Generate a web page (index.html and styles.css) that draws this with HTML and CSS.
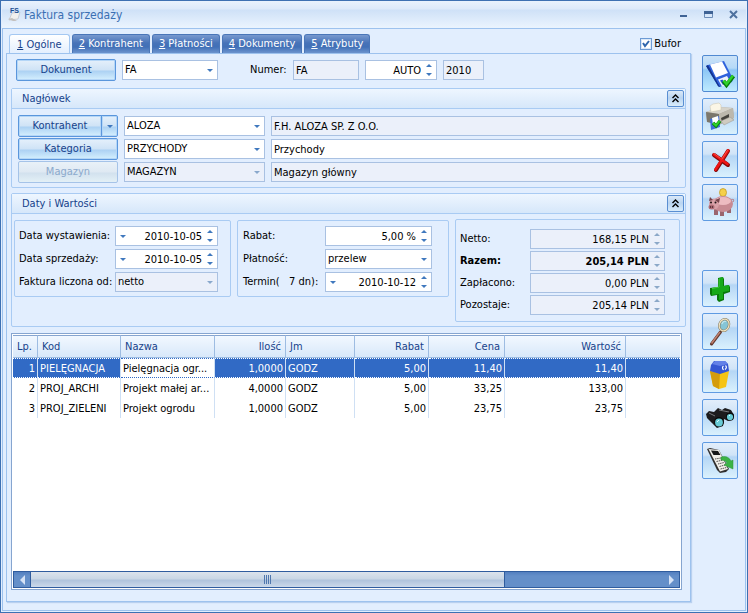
FILE: index.html
```html
<!DOCTYPE html>
<html lang="pl">
<head>
    <meta charset="UTF-8">
    <meta name="viewport" content="width=device-width, initial-scale=1.0">
    <title>Faktura sprzedaży</title>
    <link rel="stylesheet" href="styles.css">
</head>
<body>
    <div class="window">
        <header class="titlebar">
            <svg class="app-icon" width="16" height="16" viewBox="0 0 16 16" aria-hidden="true">
                <path d="M5 6L13 5L11 12L2 13Z" fill="#f2f0ee" stroke="#c9cdd6" stroke-width="1"/>
                <path d="M1 12L5 11L10 14L6 14Z" fill="#c4c0bd"/>
                <text x="3" y="6" class="app-icon-text">FS</text>
            </svg>
            <h1>Faktura sprzedaży</h1>
            <div class="window-buttons">
                <button type="button" aria-label="Minimalizuj"><svg width="9" height="9" viewBox="0 0 9 9"><path d="M1 5h7v2H1z" fill="#3f6395"/></svg></button>
                <button type="button" aria-label="Maksymalizuj"><svg width="9" height="9" viewBox="0 0 9 9"><path d="M.5 1.500h8v6h-8z" fill="none" stroke="#6d8db8"/><path d="M0 1h9v3H0z" fill="#3f6395"/></svg></button>
                <button type="button" aria-label="Zamknij"><svg width="9" height="9" viewBox="0 0 9 9"><path d="M1 1L8 8M8 1L1 8" fill="none" stroke="#4e719f" stroke-width="2"/></svg></button>
            </div>
        </header>

        <div class="frame">
            <main class="main">
                <div class="tab-row">
                    <div class="tabs" role="tablist">
                        <button type="button" class="tab active" role="tab"><u>1</u> Ogólne</button>
                        <button type="button" class="tab" role="tab"><u>2</u> Kontrahent</button>
                        <button type="button" class="tab" role="tab"><u>3</u> Płatności</button>
                        <button type="button" class="tab" role="tab"><u>4</u> Dokumenty</button>
                        <button type="button" class="tab" role="tab"><u>5</u> Atrybuty</button>
                    </div>
                    <label class="buffer"><input type="checkbox" checked>Bufor</label>
                </div>

                <div class="page">
                    <div class="doc-row">
                        <button type="button" class="btn">Dokument</button>
                        <select class="doc-type" aria-label="Typ dokumentu"><option>FA</option></select>
                        <label class="number-label" for="series">Numer:</label>
                        <input id="series" class="series" type="text" value="FA" readonly>
                        <div class="field auto">
                            <input type="text" value="AUTO" aria-label="Numer kolejny">
                            <span class="spin"><button type="button" aria-label="Więcej"></button><button type="button" aria-label="Mniej"></button></span>
                        </div>
                        <input class="year" type="text" value="2010" aria-label="Rok" readonly>
                    </div>

                    <section class="group">
                        <div class="group-head">
                            <h2>Nagłówek</h2>
                            <button type="button" class="collapse" aria-label="Zwiń"><svg width="9" height="9" viewBox="0 0 9 9"><path d="M1.500 4L4.500 1L7.500 4M1.500 8L4.500 5L7.500 8" fill="none" stroke="#000" stroke-width="1.400"/></svg></button>
                        </div>
                        <div class="header-fields">
                            <div class="split">
                                <button type="button" class="btn">Kontrahent</button>
                                <button type="button" class="btn arrow" aria-label="Rozwiń"></button>
                            </div>
                            <select aria-label="Kontrahent"><option>ALOZA</option></select>
                            <input type="text" value="F.H. ALOZA SP. Z O.O." aria-label="Nazwa kontrahenta" readonly>

                            <button type="button" class="btn">Kategoria</button>
                            <select aria-label="Kategoria"><option>PRZYCHODY</option></select>
                            <input type="text" value="Przychody" aria-label="Opis kategorii">

                            <button type="button" class="btn" disabled>Magazyn</button>
                            <select aria-label="Magazyn" disabled><option>MAGAZYN</option></select>
                            <input type="text" value="Magazyn główny" aria-label="Nazwa magazynu" readonly>
                        </div>
                    </section>

                    <section class="group values">
                        <div class="group-head">
                            <h2>Daty i Wartości</h2>
                            <button type="button" class="collapse" aria-label="Zwiń"><svg width="9" height="9" viewBox="0 0 9 9"><path d="M1.500 4L4.500 1L7.500 4M1.500 8L4.500 5L7.500 8" fill="none" stroke="#000" stroke-width="1.400"/></svg></button>
                        </div>
                        <div class="boxes">
                            <div class="box dates">
                                <label for="issued">Data wystawienia:</label>
                                <div class="field">
                                    <button type="button" class="drop" aria-label="Kalendarz"></button>
                                    <input id="issued" type="text" value="2010-10-05">
                                    <span class="spin"><button type="button" aria-label="Więcej"></button><button type="button" aria-label="Mniej"></button></span>
                                </div>
                                <label for="sold">Data sprzedaży:</label>
                                <div class="field">
                                    <button type="button" class="drop" aria-label="Kalendarz"></button>
                                    <input id="sold" type="text" value="2010-10-05">
                                    <span class="spin"><button type="button" aria-label="Więcej"></button><button type="button" aria-label="Mniej"></button></span>
                                </div>
                                <label for="basis">Faktura liczona od:</label>
                                <select id="basis" disabled><option>netto</option></select>
                            </div>

                            <div class="box payment">
                                <label for="discount">Rabat:</label>
                                <div class="field">
                                    <input id="discount" type="text" value="5,00 %">
                                    <span class="spin"><button type="button" aria-label="Więcej"></button><button type="button" aria-label="Mniej"></button></span>
                                </div>
                                <label for="method">Płatność:</label>
                                <select id="method"><option>przelew</option></select>
                                <label for="due">Termin(&nbsp;&nbsp; 7 dn):</label>
                                <div class="field">
                                    <button type="button" class="drop" aria-label="Kalendarz"></button>
                                    <input id="due" type="text" value="2010-10-12">
                                    <span class="spin"><button type="button" aria-label="Więcej"></button><button type="button" aria-label="Mniej"></button></span>
                                </div>
                            </div>

                            <div class="box totals">
                                <label for="net">Netto:</label>
                                <div class="field off">
                                    <input id="net" type="text" value="168,15 PLN" readonly>
                                    <span class="spin"><button type="button" aria-label="Więcej" disabled></button><button type="button" aria-label="Mniej" disabled></button></span>
                                </div>
                                <label for="total" class="strong">Razem:</label>
                                <div class="field off strong">
                                    <input id="total" type="text" value="205,14 PLN" readonly>
                                    <span class="spin"><button type="button" aria-label="Więcej" disabled></button><button type="button" aria-label="Mniej" disabled></button></span>
                                </div>
                                <label for="paid">Zapłacono:</label>
                                <div class="field off">
                                    <input id="paid" type="text" value="0,00 PLN" readonly>
                                    <span class="spin"><button type="button" aria-label="Więcej" disabled></button><button type="button" aria-label="Mniej" disabled></button></span>
                                </div>
                                <label for="left">Pozostaje:</label>
                                <div class="field off">
                                    <input id="left" type="text" value="205,14 PLN" readonly>
                                    <span class="spin"><button type="button" aria-label="Więcej" disabled></button><button type="button" aria-label="Mniej" disabled></button></span>
                                </div>
                            </div>
                        </div>
                    </section>

                    <div class="grid">
                        <table>
                            <colgroup>
                                <col class="c-lp"><col class="c-code"><col class="c-name"><col class="c-qty"><col class="c-unit"><col class="c-disc"><col class="c-price"><col class="c-value"><col>
                            </colgroup>
                            <thead>
                                <tr>
                                    <th>Lp.</th>
                                    <th>Kod</th>
                                    <th>Nazwa</th>
                                    <th class="num">Ilość</th>
                                    <th>Jm</th>
                                    <th class="num">Rabat</th>
                                    <th class="num">Cena</th>
                                    <th class="num">Wartość</th>
                                    <th></th>
                                </tr>
                            </thead>
                            <tbody>
                                <tr class="selected">
                                    <td class="num">1</td><td>PIELĘGNACJA</td><td class="editing">Pielęgnacja ogr...</td><td class="num">1,0000</td><td>GODZ</td><td class="num">5,00</td><td class="num">11,40</td><td class="num">11,40</td><td></td>
                                </tr>
                                <tr>
                                    <td class="num">2</td><td>PROJ_ARCHI</td><td>Projekt małej ar...</td><td class="num">4,0000</td><td>GODZ</td><td class="num">5,00</td><td class="num">33,25</td><td class="num">133,00</td><td></td>
                                </tr>
                                <tr>
                                    <td class="num">3</td><td>PROJ_ZIELENI</td><td>Projekt ogrodu</td><td class="num">1,0000</td><td>GODZ</td><td class="num">5,00</td><td class="num">23,75</td><td class="num">23,75</td><td></td>
                                </tr>
                            </tbody>
                        </table>
                        <div class="scrollbar">
                            <button type="button" aria-label="W lewo"><svg width="5" height="10" viewBox="0 0 5 10"><path d="M5 0v10L0 5z" fill="#d5e2f5"/></svg></button>
                            <div class="track"><div class="thumb"><i></i><i></i><i></i><i></i></div></div>
                            <button type="button" aria-label="W prawo"><svg width="5" height="10" viewBox="0 0 5 10"><path d="M0 0v10l5-5z" fill="#d5e2f5"/></svg></button>
                        </div>
                    </div>
                </div>
            </main>

            <aside class="tools">
                <button type="button" class="tool current" aria-label="Zapisz">
                    <svg viewBox="1 1 34 35">
                        <path d="M4 11L6 10L22 6L31 24L30 27L18 32L16 31Z" fill="#2f62dc"/>
                        <path d="M4 11L16 31L17 32L18 32L6 10Z" fill="#15348f"/>
                        <path d="M8 9.500L20 6.500L26 18L14 22.500Z" fill="#fff"/>
                        <path d="M16 24.500L25 21L29 28L20 31.500Z" fill="#f0f3fa"/>
                        <path d="M18 25.500L20.500 24.500L23 29L21 30Z" fill="#2453c8"/>
                        <path d="M21.500 26L24.500 30L31.500 21" fill="none" stroke="#087d08" stroke-width="4"/>
                        <path d="M21.500 25.500L24.500 29L31 20.500" fill="none" stroke="#2fd12a" stroke-width="2.500"/>
                    </svg>
                </button>
                <button type="button" class="tool" aria-label="Drukuj i zapisz">
                    <svg viewBox="1 1 34 35">
                        <path d="M4 14L18 9L31 10L32 20L17 27L5 23Z" fill="#aaa69b"/>
                        <path d="M4 14L18 9L31 10L17 16Z" fill="#d6d3ca"/>
                        <path d="M8 8L11 6L17 5L19 7V12L9 14Z" fill="#fbf6e6" stroke="#c9c3ad" stroke-width=".5"/>
                        <path d="M4 14L17 16V27L5 24Z" fill="#7b776c"/>
                        <path d="M17 16L31 10L32 20L17 26Z" fill="#bcb8ad"/>
                        <path d="M19 20L27 16V20L20 24Z" fill="#45433e"/>
                        <path d="M19 23L28 19L32 22L22 27Z" fill="#cfcbc0" stroke="#99958b" stroke-width=".5"/>
                        <path d="M8 21L17 18L18 29L9 32Z" fill="#3f6fd8"/>
                        <path d="M10 20L16 18L17 25L11 27Z" fill="#fff"/>
                        <path d="M11 25L14 28L18 23" fill="none" stroke="#0b850b" stroke-width="3.500"/>
                        <path d="M11 25L14 27.500L17.500 23" fill="none" stroke="#2fd12a" stroke-width="2"/>
                    </svg>
                </button>
                <button type="button" class="tool" aria-label="Anuluj">
                    <svg viewBox="1 1 34 35" stroke-linecap="round">
                        <path d="M12 14L26 24M26 10L14 29" fill="none" stroke="#830b0b" stroke-width="4"/>
                        <path d="M12 13.500L25.500 23M26 9.500L13.500 28.500" fill="none" stroke="#ef1515" stroke-width="2.700"/>
                        <path d="M12 12.500L18 17M25.500 9.500L20 18" fill="none" stroke="#ff6a5c" stroke-width=".7"/>
                    </svg>
                </button>
                <button type="button" class="tool" aria-label="Płatność">
                    <svg viewBox="1 1 34 35">
                        <path d="M12 25h4v6h-4zM18 26h4v6h-4zM25 23h4v6h-4z" fill="#9a666d"/>
                        <path d="M29 16q4-2 2 2" fill="none" stroke="#b77880" stroke-width="1"/>
                        <ellipse cx="21" cy="8.500" rx="3.500" ry="4" fill="#f5d04a" stroke="#bd9319" stroke-width=".7"/>
                        <ellipse cx="21" cy="20" rx="10" ry="8" fill="#c88b93"/>
                        <ellipse cx="21" cy="17" rx="8" ry="4" fill="#edbcc1"/>
                        <ellipse cx="12" cy="20" rx="5" ry="5.500" fill="#d9a0a7"/>
                        <path d="M7 17L8 13L11 16M13 16L18 14L17 19Z" fill="#79464d"/>
                        <ellipse cx="9.500" cy="23" rx="3" ry="2.500" fill="#b26e78"/>
                        <circle cx="8.500" cy="23" r=".7" fill="#33191d"/><circle cx="10.500" cy="23" r=".7" fill="#33191d"/>
                        <circle cx="9" cy="18.500" r="1" fill="#1d1012"/><circle cx="13.500" cy="18.500" r="1" fill="#1d1012"/>
                    </svg>
                </button>
                <button type="button" class="tool first" aria-label="Dodaj">
                    <svg viewBox="1 1 34 35">
                        <path d="M16 8L21 7L22 9V16L27 15L28 17V22L22 24V30L17 32L15 30V25L9 26L8 24V18L16 17Z" fill="#08790a"/>
                        <path d="M17 8L21 7V16L27 15V21L21 22V29L17 30V24L10 25V18L17 17Z" fill="#16a918"/>
                        <path d="M17 9V17L10 18.500" fill="none" stroke="#4fd549" stroke-width=".8"/>
                    </svg>
                </button>
                <button type="button" class="tool" aria-label="Podgląd">
                    <svg viewBox="1 1 34 35">
                        <path d="M18.500 19L9.500 31" stroke="#62362b" stroke-width="3" stroke-linecap="round"/>
                        <path d="M18 19L9.500 30.500" stroke="#c08270" stroke-width="1.500"/>
                        <g transform="rotate(20 22 12.500)">
                            <ellipse cx="22" cy="12" rx="4.800" ry="6" fill="#86c5d6" stroke="#7f755b" stroke-width="2.300"/>
                            <ellipse cx="22" cy="12" rx="4.800" ry="6" fill="none" stroke="#f0e4c2" stroke-width="1.300"/>
                            <path d="M19.500 12q0-4 3-4" fill="none" stroke="#c4e8f0" stroke-width="1"/>
                        </g>
                    </svg>
                </button>
                <button type="button" class="tool" aria-label="Usuń">
                    <svg viewBox="1 1 34 35">
                        <path d="M8 15L18 17L27 15L24 31L17 33L11 30Z" fill="#f6c414"/>
                        <path d="M8 15L18 17L17 33L11 30Z" fill="#d49c0c"/>
                        <path d="M8 15L9 9L12 5L23 5L26 8L27 15L18 18Z" fill="#3557d2"/>
                        <path d="M10 8L13 5H23L26 8L18 10Z" fill="#6381e8"/>
                        <path d="M21.500 10q-2 1.500 0 4M23.500 9.500q2 2-.5 4" fill="none" stroke="#fff" stroke-width="1.200"/>
                    </svg>
                </button>
                <button type="button" class="tool" aria-label="Szukaj">
                    <svg viewBox="1 1 34 35">
                        <path d="M4 15L7 12L12 13L16 9L20 11L23 9L29 11L32 16L31 21L26 22L22 20L21 27L15 29L10 24L5 19Z" fill="#1c1c1d"/>
                        <path d="M7 14L13 17M17 11L27 13" stroke="#77797c" stroke-width="1"/>
                        <circle cx="17" cy="23" r="5" fill="#0b0b0b"/>
                        <circle cx="17" cy="23.500" r="3.900" fill="#68cbd5"/>
                        <circle cx="28" cy="17.500" r="4" fill="#0b0b0b"/>
                        <circle cx="28" cy="18" r="3.100" fill="#68cbd5"/>
                        <path d="M15 23l2-2M27 17l1-1" stroke="#dcffff" stroke-width="1"/>
                    </svg>
                </button>
                <button type="button" class="tool" aria-label="Kalkulator">
                    <svg viewBox="1 1 34 35">
                        <path d="M5 7L8 6L17 8L27 27L24 30L18 31L15 28Z" fill="#302f2d"/>
                        <path d="M6.500 7L17 8L26 27L18 29.500Z" fill="#f0eee8"/>
                        <path d="M9 8.500L16 9L18.500 13L11.500 13Z" fill="#171717"/>
                        <path d="M13 17L19 16M14.500 19.500L21 18M16 22L22 20.500M17.500 24.500L23 23M18.500 27L24.500 25.500" stroke="#55534f" stroke-width="1" stroke-dasharray="1.500 .7"/>
                        <path d="M19 15Q26 13 29 19L31 18V27L22 23L25 21Q23 18 19 18Z" fill="#3cb345" stroke="#2c9236" stroke-width=".5"/>
                    </svg>
                </button>
            </aside>
        </div>
    </div>
</body>
</html>
```

FILE: styles.css
```css
* {
    box-sizing: border-box;
}
body {
    margin: 0;
    font-family: "DejaVu Sans Condensed", Tahoma, "Noto Sans", sans-serif;
    font-size: 11px;
    line-height: 14px;
    color: #000;
    background-color: #e2eefe;
}
button, input, select {
    font: inherit;
    color: inherit;
    margin: 0;
    min-width: 0;
}
button {
    padding: 0;
    border: none;
    background: none;
}
svg {
    display: block;
}
h1, h2 {
    margin: 0;
    font-weight: normal;
}
.window {
    display: flex;
    flex-direction: column;
    min-height: 100vh;
    padding: 0 1px 1px;
    border: 1px solid #3d70b2;
}

/* title bar */
.titlebar {
    display: flex;
    align-items: center;
    height: 27px;
    padding: 0 8px 0 5px;
    background: linear-gradient(#e9f2fd 0, #dce9fa 8px, #cfe1f7 9px, #e9f3fe 26px);
}
.app-icon-text {
    font: bold 7px "Liberation Sans", sans-serif;
    fill: #1c4f92;
}
h1 {
    flex: 1;
    margin-left: 1px;
    font-size: 12px;
    line-height: 16px;
    color: #3a6fb3;
}
.window-buttons {
    display: flex;
    gap: 16px;
}

.frame {
    flex: 1;
    display: flex;
    padding: 5px 7px 8px 3px;
    border: 1px solid #9dc2ee;
    background-color: #e2eefe;
}
.main {
    flex: 1;
    min-width: 0;
    display: flex;
    flex-direction: column;
}

/* tabs */
.tab-row {
    display: flex;
    justify-content: space-between;
    padding: 0 10px 0 3px;
}
.tabs {
    display: flex;
    gap: 2px;
}
.tab {
    height: 19px;
    padding: 0 6px;
    border: 1px solid #4a76b8;
    border-bottom: none;
    border-radius: 3px 3px 0 0;
    color: #fff;
    background: linear-gradient(#7899cf, #4773b8 8px, #4170b7 12px, #6c93cd);
}
.tab.active {
    height: 20px;
    margin-bottom: -1px;
    padding: 0 7px;
    border-color: #a4c8f2;
    color: #16428b;
    background: linear-gradient(#fff, #e2eefe);
}
.buffer {
    display: flex;
    align-items: center;
    gap: 2px;
}
.buffer input {
    appearance: none;
    width: 12px;
    height: 12px;
    border: 1px solid #6d9bd5;
    background: #fff url("data:image/svg+xml,%3Csvg xmlns='http://www.w3.org/2000/svg' width='10' height='10'%3E%3Cpath d='M2 4l2 3 4-5' fill='none' stroke='%232f66ad' stroke-width='2'/%3E%3C/svg%3E") center no-repeat;
    box-shadow: inset 0 0 0 1px #dbe8f8;
}

.page {
    flex: 1;
    display: flex;
    flex-direction: column;
    padding: 5px 4px 11px;
    border: 1px solid #9dc2ee;
    box-shadow: 1px 1px 1px #b9d0ef;
}

/* buttons and fields */
.btn {
    height: 22px;
    border: 1px solid #5a96dc;
    border-radius: 2px;
    color: #16428b;
    background: linear-gradient(#e5f0fb, #cfe3f6 10px, #acd1f3 11px, #d5f0fe);
    box-shadow: inset 0 0 0 1px #b4d6f7;
}
.btn:disabled {
    border-color: #a5c3e8;
    color: #8ba9cc;
    background: linear-gradient(#e9f1f8, #dfe9f3 10px, #d2e1ee 11px, #e3f0f6);
    box-shadow: none;
}
input[type="text"], select, .field {
    height: 20px;
    padding: 0 2px;
    border: 1px solid #a9c1e2;
    border-radius: 0;
    outline: none;
    background-color: #fff;
}
input[readonly], select:disabled, .field.off {
    background-color: #ebf0fa;
}
select {
    appearance: none;
    color: #000;
    opacity: 1;
    background-image: url("data:image/svg+xml,%3Csvg xmlns='http://www.w3.org/2000/svg' width='6' height='3'%3E%3Cpath d='M0 0h6L3 3z' fill='%233f78be'/%3E%3C/svg%3E");
    background-repeat: no-repeat;
    background-position: right 4px center;
}
select:disabled {
    background-image: url("data:image/svg+xml,%3Csvg xmlns='http://www.w3.org/2000/svg' width='6' height='3'%3E%3Cpath d='M0 0h6L3 3z' fill='%2389a8cc'/%3E%3C/svg%3E");
}
.field {
    display: flex;
    align-items: center;
    padding: 0;
}
.field input[type="text"] {
    flex: 1;
    width: 0;
    height: 18px;
    padding: 0 5px 0 0;
    border: none;
    background: none;
    text-align: right;
}
.drop, .btn.arrow {
    width: 14px;
    display: flex;
    align-items: center;
    justify-content: center;
}
.drop::before, .btn.arrow::before {
    content: "";
    border: 3px solid transparent;
    border-top-color: #3f78be;
    border-bottom: none;
}
.spin {
    width: 10px;
    display: flex;
    flex-direction: column;
    gap: 6px;
}
.spin button {
    width: 6px;
    height: 3px;
    border: 3px solid transparent;
}
.spin button:first-child {
    border-top: none;
    border-bottom-color: #3f78be;
}
.spin button:last-child {
    border-bottom: none;
    border-top-color: #3f78be;
}
.off .spin button:first-child {
    border-bottom-color: #8ba8c8;
}
.off .spin button:last-child {
    border-top-color: #8ba8c8;
}
.strong {
    font-weight: bold;
}

.doc-row {
    display: flex;
    align-items: center;
    padding: 0 5px;
    gap: 6px;
}
.doc-row .btn {
    width: 100px;
}
.doc-type {
    width: 96px;
}
.number-label {
    width: 37px;
    margin-left: 26px;
}
.doc-row .series {
    width: 66px;
}
.auto {
    width: 72px;
}
.doc-row .year {
    width: 41px;
}

/* collapsible groups */
.group {
    margin-top: 7px;
    border: 1px solid #a9cbf3;
    border-radius: 2px;
}
.group + .group {
    margin-top: 5px;
}
.group-head {
    display: flex;
    align-items: center;
    justify-content: space-between;
    height: 20px;
    padding: 0 1px 0 10px;
    border-bottom: 1px solid #a9cbf3;
    background: linear-gradient(#eef6ff, #d6e7fa);
}
h2 {
    font-size: 11px;
    line-height: 14px;
    color: #16428b;
}
.collapse {
    display: flex;
    align-items: center;
    justify-content: center;
    width: 17px;
    height: 17px;
    border: 1px solid #5a8fd3;
    border-radius: 2px;
    background: linear-gradient(#dbe9f8, #b9d4f1 7px, #d9ecfb);
}
.header-fields {
    display: grid;
    grid-template-columns: 100px 141px 1fr;
    align-items: center;
    gap: 1px 6px;
    padding: 6px 16px 4px 6px;
}
.split {
    display: flex;
}
.split .btn {
    flex: 1;
    border-radius: 2px 0 0 2px;
}
.split .btn.arrow {
    flex: 0 0 17px;
    margin-left: -1px;
    border-radius: 0 2px 2px 0;
}
.values {
    min-height: 134px;
}
.boxes {
    display: flex;
    align-items: flex-start;
    gap: 6px;
    padding: 5px 5px 4px 2px;
}
.box {
    display: grid;
    align-items: center;
    gap: 3px 0;
    margin-top: 1px;
    padding: 5px 12px 4px 4px;
    border: 1px solid #a9cbf3;
    border-radius: 2px;
}
.dates {
    grid-template-columns: 96px 103px;
}
.payment {
    grid-template-columns: 82px 107px;
    padding-left: 5px;
    padding-right: 16px;
}
.totals {
    flex: 1;
    grid-template-columns: 70px 1fr;
    gap: 2px 0;
    margin-top: 0;
    padding: 9px 14px 6px 4px;
}

/* invoice items */
.grid {
    flex: 1;
    display: flex;
    flex-direction: column;
    justify-content: space-between;
    margin: 6px 4px 0 0;
    padding: 1px;
    border: 1px solid #86a5d0;
    background-color: #fff;
}
table {
    width: 100%;
    table-layout: fixed;
    border-collapse: separate;
    border-spacing: 0;
}
.c-lp { width: 25px; }
.c-code { width: 83px; }
.c-name { width: 94px; }
.c-qty { width: 71px; }
.c-unit { width: 69px; }
.c-disc { width: 74px; }
.c-price { width: 76px; }
.c-value { width: 121px; }
th {
    height: 23px;
    padding: 0 4px;
    border-top: 1px solid #86a5d0;
    border-right: 1px solid #9dbce2;
    border-bottom: 1px solid #9dbce2;
    font-weight: normal;
    text-align: left;
    color: #16428b;
    background: linear-gradient(#f2f8ff, #d8e8fa);
}
td {
    height: 20px;
    padding: 1px 2px 0;
    border-right: 1px solid #cfe0f4;
    white-space: nowrap;
    overflow: hidden;
}
th:last-child, td:last-child {
    border-right: none;
}
.num {
    text-align: right;
}
.selected td {
    border-top: 1px dotted #fff;
    border-bottom: 1px dotted #fff;
    color: #fff;
    background-color: #316ac5;
}
.selected td.editing {
    border-color: #316ac5;
    border-right-color: #cfe0f4;
    color: #000;
    background-color: #fff;
}
.scrollbar {
    display: flex;
    height: 17px;
    border: 1px solid #2f5c9e;
    background: linear-gradient(#537fbf, #648fc9 4px);
}
.scrollbar button {
    width: 16px;
    display: flex;
    align-items: center;
    justify-content: center;
}
.track {
    flex: 1;
}
.thumb {
    display: flex;
    align-items: center;
    justify-content: center;
    gap: 1px;
    width: 75%;
    height: 15px;
    border: solid #2f5c9e;
    border-width: 0 1px;
    background: linear-gradient(#dbe3ec, #c8d6e5 7px, #afc3dc 8px, #cbd9ea);
}
.thumb i {
    width: 1px;
    height: 9px;
    background-color: #4f77ae;
}

/* side buttons */
.tools {
    display: flex;
    flex-direction: column;
    gap: 6px;
    margin-left: 11px;
    padding-top: 21px;
}
.tool {
    width: 36px;
    height: 37px;
    border: 1px solid #5f9be2;
    border-radius: 2px;
    background: linear-gradient(#e2eefb, #d1e4f7 12px, #b5d6f5 14px, #daf1fd);
}
.tool svg {
    width: 34px;
    height: 35px;
}
.tool.current {
    border-color: #5089d2;
    background: linear-gradient(#cbe2f8, #b5d9f7 12px, #8dc6f5 14px, #bdeaff);
}
.tool.first {
    margin-top: 43px;
}
```
